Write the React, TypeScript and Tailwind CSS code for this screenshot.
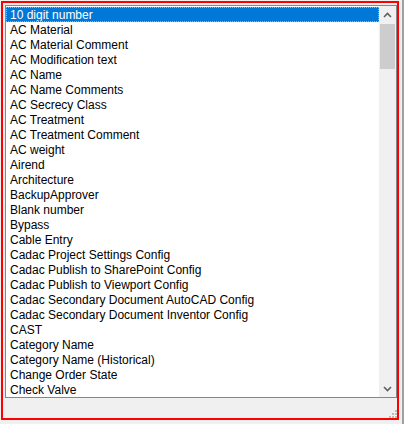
import React from "react";

const items = [
  "10 digit number",
  "AC Material",
  "AC Material Comment",
  "AC Modification text",
  "AC Name",
  "AC Name Comments",
  "AC Secrecy Class",
  "AC Treatment",
  "AC Treatment Comment",
  "AC weight",
  "Airend",
  "Architecture",
  "BackupApprover",
  "Blank number",
  "Bypass",
  "Cable Entry",
  "Cadac Project Settings Config",
  "Cadac Publish to SharePoint Config",
  "Cadac Publish to Viewport Config",
  "Cadac Secondary Document AutoCAD Config",
  "Cadac Secondary Document Inventor Config",
  "CAST",
  "Category Name",
  "Category Name (Historical)",
  "Change Order State",
  "Check Valve",
];

function Chevron({ up }: { up: boolean }) {
  return (
    <svg width="9" height="6" viewBox="0 0 9 6">
      <polyline
        points={up ? "1,5 4.5,1.5 8,5" : "1,1 4.5,4.5 8,1"}
        fill="none"
        stroke="#606060"
        strokeWidth="1.6"
      />
    </svg>
  );
}

export default function App() {
  return (
    <div className="relative w-[404px] h-[424px] bg-[#f0f0f0] overflow-hidden font-['Liberation_Sans',Arial,sans-serif] text-[12px] text-black">
      <div className="pl-[5px] pt-[5px]">
        <div className="w-[392px] h-[393px] border border-[#828790] bg-white flex">
          <div className="flex-1 overflow-hidden flex flex-col pt-[1px]">
            {items.map((t, i) =>
              i === 0 ? (
                <div
                  key={t}
                  className="h-[15px] shrink-0 leading-[15px] pl-[3px] bg-[#0078d7] text-white border border-dotted border-[#f0a050] whitespace-nowrap overflow-hidden"
                >
                  {t}
                </div>
              ) : (
                <div
                  key={t}
                  className="h-[15px] shrink-0 leading-[17px] pl-[4px] whitespace-nowrap overflow-hidden"
                >
                  {t}
                </div>
              )
            )}
          </div>
          <div className="w-[17px] bg-[#f0f0f0] flex flex-col">
            <div className="h-[17px] flex items-center justify-center">
              <Chevron up />
            </div>
            <div className="flex-1 pt-[1px] px-[1px]">
              <div className="h-[45px] bg-[#cdcdcd]" />
            </div>
            <div className="h-[17px] flex items-center justify-center">
              <Chevron up={false} />
            </div>
          </div>
        </div>
      </div>

      {/* red annotation frame */}
      <div className="absolute left-[1px] top-[1px] w-[398px] h-[419px] border-2 border-[#ff0000] pointer-events-none" />

      {/* window edge */}
      <div className="absolute right-0 top-0 w-[2px] h-[424px] bg-[#a0a0a0]" />

      {/* size grip */}
      <div className="absolute left-[395px] top-[410px] w-[2px] h-[2px] bg-[#bcbcbc]" />
      <div className="absolute left-[392px] top-[413px] w-[2px] h-[2px] bg-[#bcbcbc]" />
      <div className="absolute left-[395px] top-[413px] w-[2px] h-[2px] bg-[#bcbcbc]" />
      <div className="absolute left-[389px] top-[416px] w-[2px] h-[2px] bg-[#bcbcbc]" />
      <div className="absolute left-[392px] top-[416px] w-[2px] h-[2px] bg-[#bcbcbc]" />
      <div className="absolute left-[395px] top-[416px] w-[2px] h-[2px] bg-[#bcbcbc]" />
    </div>
  );
}
